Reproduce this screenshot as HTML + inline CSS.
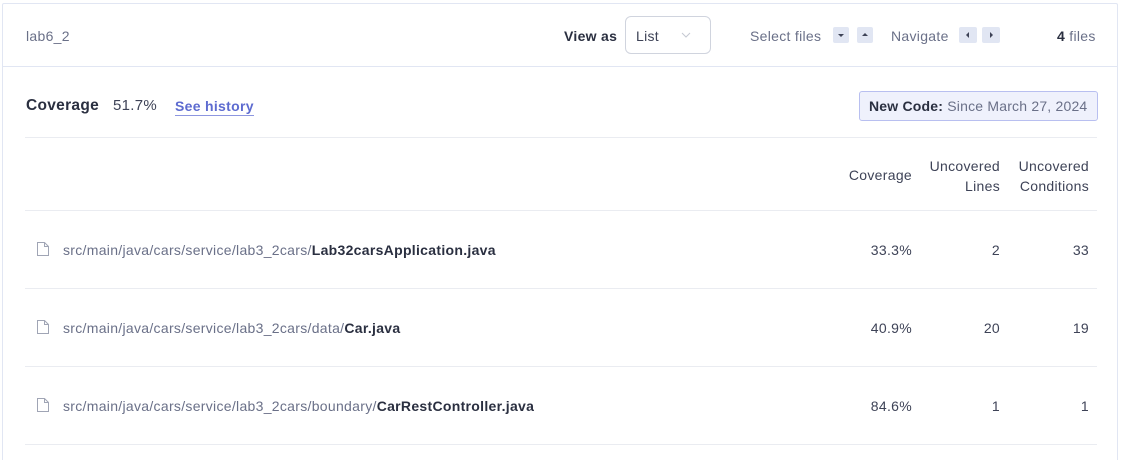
<!DOCTYPE html>
<html><head><style>
*{box-sizing:border-box;margin:0;padding:0}
html,body{width:1124px;height:460px;overflow:hidden}
body{background:#fff;font-family:"Liberation Sans",sans-serif;font-size:14px;letter-spacing:0.3px;color:#3e4357;position:relative}
.box{position:absolute;left:2px;top:3px;width:1116px;height:457px;border:1px solid #e1e6f3;border-bottom:none;border-radius:2px 2px 0 0}
.hdr{position:absolute;left:0;top:0;right:0;height:63px;border-bottom:1px solid #e1e6f3}
.abs{position:absolute;white-space:nowrap}
.gray{color:#6a7088}
.btn{position:absolute;width:16px;height:16px;background:#e1e6f3;border-radius:2px}
.line{position:absolute;left:25px;width:1072px;height:1px;background:#eaecf1}
.num{position:absolute;text-align:right;white-space:nowrap}
</style></head><body>
<div class="box">
 <div class="hdr"></div>
</div>
<div class="abs gray" style="left:26px;top:28px">lab6_2</div>
<div class="abs" style="left:564px;top:28px;font-weight:bold;color:#2a2f40">View as</div>
<div class="abs" style="left:625px;top:16px;width:86px;height:38px;border:1px solid #d0d4de;border-radius:6px"></div>
<div class="abs" style="left:636px;top:28px;color:#3e4357">List</div>
<svg class="abs" style="left:680px;top:31px" width="12" height="8"><path d="M2 2l4 4 4-4" fill="none" stroke="#c4c8d2" stroke-width="1"/></svg>
<div class="abs gray" style="left:750px;top:28px">Select files</div>
<div class="btn" style="left:833px;top:27px"></div>
<svg class="abs" style="left:833px;top:27px" width="16" height="16"><path d="M5 7h6l-3 3z" fill="#3e4357"/></svg>
<div class="btn" style="left:857px;top:27px"></div>
<svg class="abs" style="left:857px;top:27px" width="16" height="16"><path d="M5 9h6l-3-3z" fill="#3e4357"/></svg>
<div class="abs gray" style="left:891px;top:28px">Navigate</div>
<div class="btn" style="left:959px;top:27px;width:18px"></div>
<svg class="abs" style="left:959px;top:27px" width="18" height="16"><path d="M10 5v6l-3-3z" fill="#3e4357"/></svg>
<div class="btn" style="left:982px;top:27px;width:18px"></div>
<svg class="abs" style="left:982px;top:27px" width="18" height="16"><path d="M8 5v6l3-3z" fill="#3e4357"/></svg>
<div class="abs gray" style="left:1057px;top:28px"><b style="color:#2a2f40">4</b> files</div>

<div class="abs" style="left:26px;top:97px;font-size:15.5px;font-weight:bold;color:#2a2f40">Coverage</div>
<div class="abs" style="left:113px;top:97px;font-size:15px">51.7%</div>
<div class="abs" style="left:175px;top:98px;font-weight:bold;color:#5d6bd0;border-bottom:1px solid #8d96e0;line-height:17px">See history</div>
<div class="abs" style="left:859px;top:91px;width:239px;height:30px;background:#eff1fc;border:1px solid #b8bff0;border-radius:3px"></div>
<div class="abs" style="left:869px;top:98px;color:#6a7088;letter-spacing:0.2px"><b style="color:#2a2f40">New Code:</b> Since March 27, 2024</div>

<div class="line" style="top:137px"></div>
<div class="num" style="left:820px;width:92px;top:167px">Coverage</div>
<div class="num" style="left:910px;width:90px;top:156px;line-height:20px">Uncovered<br>Lines</div>
<div class="num" style="left:1000px;width:89px;top:156px;line-height:20px">Uncovered<br>Conditions</div>
<div class="line" style="top:210px"></div>

<svg class="abs" style="left:36px;top:241px" width="14" height="16"><path d="M1.5 1.5h7l4 4v9h-11z M8.5 1.5v4h4" fill="none" stroke="#a0a5b5" stroke-width="1"/></svg>
<div class="abs gray" style="left:63px;top:242px">src/main/java/cars/service/lab3_2cars/<b style="color:#2a2f40">Lab32carsApplication.java</b></div>
<div class="num" style="left:830px;width:82px;top:242px">33.3%</div>
<div class="num" style="left:920px;width:80px;top:242px">2</div>
<div class="num" style="left:1010px;width:79px;top:242px">33</div>
<div class="line" style="top:288px"></div>

<svg class="abs" style="left:36px;top:319px" width="14" height="16"><path d="M1.5 1.5h7l4 4v9h-11z M8.5 1.5v4h4" fill="none" stroke="#a0a5b5" stroke-width="1"/></svg>
<div class="abs gray" style="left:63px;top:320px">src/main/java/cars/service/lab3_2cars/data/<b style="color:#2a2f40">Car.java</b></div>
<div class="num" style="left:830px;width:82px;top:320px">40.9%</div>
<div class="num" style="left:920px;width:80px;top:320px">20</div>
<div class="num" style="left:1010px;width:79px;top:320px">19</div>
<div class="line" style="top:366px"></div>

<svg class="abs" style="left:36px;top:397px" width="14" height="16"><path d="M1.5 1.5h7l4 4v9h-11z M8.5 1.5v4h4" fill="none" stroke="#a0a5b5" stroke-width="1"/></svg>
<div class="abs gray" style="left:63px;top:398px">src/main/java/cars/service/lab3_2cars/boundary/<b style="color:#2a2f40">CarRestController.java</b></div>
<div class="num" style="left:830px;width:82px;top:398px">84.6%</div>
<div class="num" style="left:920px;width:80px;top:398px">1</div>
<div class="num" style="left:1010px;width:79px;top:398px">1</div>
<div class="line" style="top:444px"></div>
</body></html>
